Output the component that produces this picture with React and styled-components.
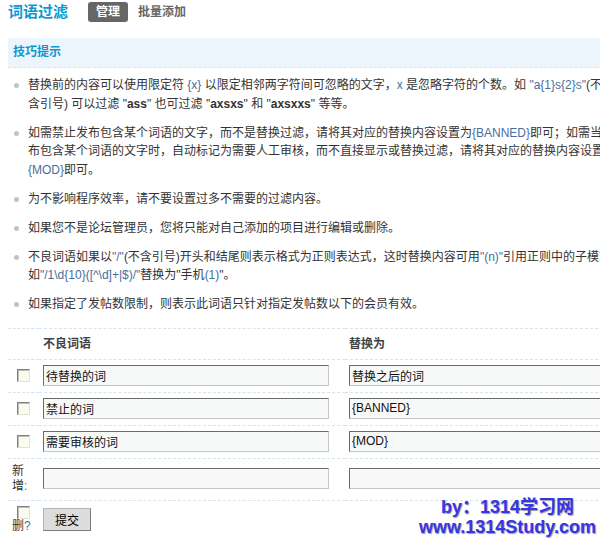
import React from 'react'
import styled, { createGlobalStyle, css } from 'styled-components'

const GlobalStyle = createGlobalStyle`
  html, body {
    margin: 0;
    padding: 0;
    background: #fff;
    overflow: hidden;
  }
  body {
    font-family: "Liberation Sans", "Noto Sans CJK SC", sans-serif;
    font-size: 12px;
    color: #333;
  }
`

const Frame = styled.div`
  position: relative;
  width: 600px;
  height: 538px;
  overflow: hidden;
`

const Page = styled.div`
  width: 820px;
  padding: 0 8px;
`

const Header = styled.div`
  display: flex;
  align-items: center;
  height: 24px;
`

const Title = styled.h1`
  margin: 0 20px 0 0;
  font-size: 15px;
  line-height: 20px;
  font-weight: bold;
  color: #0c98d0;
`

const Tab = styled.span`
  display: inline-block;
  height: 20px;
  line-height: 20px;
  padding: 0 8px;
  border-radius: 3px;
  font-weight: bold;
  color: #666;
  ${p => p.active && css`
    background: #666;
    color: #fff;
  `}
`

const Tips = styled.div`
  margin-top: 14px;
  height: 29px;
  line-height: 29px;
  padding-left: 5px;
  background: #edf5fc;
  border-bottom: 1px dashed #d6e5f3;
  font-weight: bold;
  color: #0c98d0;
`

const TipList = styled.ul`
  margin: 0;
  padding: 8px 0 3.5px;
  list-style: none;
`

const Tip = styled.li`
  position: relative;
  padding-left: 20px;
  margin-bottom: 10.5px;
  line-height: 18.5px;
  white-space: nowrap;

  &::before {
    content: "";
    position: absolute;
    left: 6px;
    top: 7px;
    width: 5px;
    height: 5px;
    border-radius: 50%;
    background: #c2c2c2;
  }
`

const Code = styled.span`
  color: #466f9e;
`

const Strong = styled.b`
  color: #333;
`

const Table = styled.table`
  width: 820px;
  border-collapse: collapse;
  table-layout: fixed;
`

const Th = styled.th`
  padding: 6px 4px;
  line-height: 18px;
  text-align: left;
  font-weight: bold;
  color: #444;
  border-top: 1px dashed #d6e5f3;
`

const Td = styled.td`
  padding: 5px 4px 6px;
  vertical-align: middle;
  border-top: 1px dashed #d6e5f3;
  line-height: 15px;
`

const Check = styled.input.attrs({ type: 'checkbox' })`
  appearance: none;
  display: block;
  width: 13px;
  height: 13px;
  margin: 0 0 0 5px;
  box-sizing: border-box;
  border: 1px solid;
  border-color: #808080 #e2e2d6 #e2e2d6 #808080;
  background: #fbfbf2;
  box-shadow: inset 1px 1px 0 #bdbdb4;
`

const Field = styled.input`
  box-sizing: border-box;
  width: 286px;
  height: 21px;
  padding: 0 2px;
  border: 1px solid;
  border-color: #6b6b6b #c6c6c6 #c6c6c6 #6b6b6b;
  background: #f7f9f9;
  font-family: "Liberation Sans", "Noto Sans CJK SC", sans-serif;
  font-size: 12px;
  color: #111;
  outline: none;
`

const Button = styled.button`
  width: 48px;
  height: 23px;
  padding: 0;
  border: 1px solid;
  border-color: #b4b4b4 #7c7c7c #7c7c7c #b4b4b4;
  background: #dcdcdc;
  font-family: "Liberation Sans", "Noto Sans CJK SC", sans-serif;
  font-size: 12px;
  color: #000;
`

const Watermark = styled.div`
  position: absolute;
  right: 4px;
  top: 497px;
  text-align: center;
  font-family: "Liberation Sans", "Noto Sans CJK SC", sans-serif;
  font-size: 18px;
  line-height: 20px;
  font-weight: bold;
  color: #3535ea;
  text-shadow: 1px 1px 1px #9a9a9a;
`

const rows = [
  ['待替换的词', '替换之后的词'],
  ['禁止的词', '{BANNED}'],
  ['需要审核的词', '{MOD}'],
]

export default function App() {
  return (
    <Frame>
      <GlobalStyle />
      <Page>
        <Header>
          <Title>词语过滤</Title>
          <Tab active>管理</Tab>
          <Tab style={{ marginLeft: 2 }}>批量添加</Tab>
        </Header>

        <Tips>技巧提示</Tips>

        <TipList>
          <Tip>
            替换前的内容可以使用限定符 <Code>{'{x}'}</Code> 以限定相邻两字符间可忽略的文字，<Code>x</Code> 是忽略字符的个数。如 <Code>"a{'{1}'}s{'{2}'}s"</Code>(不<br />
            含引号) 可以过滤 "<Strong>ass</Strong>" 也可过滤 "<Strong>axsxs</Strong>" 和 "<Strong>axsxxs</Strong>" 等等。
          </Tip>
          <Tip>
            如需禁止发布包含某个词语的文字，而不是替换过滤，请将其对应的替换内容设置为<Code>{'{BANNED}'}</Code>即可；如需当用户发<br />
            布包含某个词语的文字时，自动标记为需要人工审核，而不直接显示或替换过滤，请将其对应的替换内容设置为<br />
            <Code>{'{MOD}'}</Code>即可。
          </Tip>
          <Tip>为不影响程序效率，请不要设置过多不需要的过滤内容。</Tip>
          <Tip>如果您不是论坛管理员，您将只能对自己添加的项目进行编辑或删除。</Tip>
          <Tip>
            不良词语如果以<Code>"/"</Code>(不含引号)开头和结尾则表示格式为正则表达式，这时替换内容可用<Code>"(n)"</Code>引用正则中的子模式，<br />
            如<Code>{'"/1\\d{10}([^\\d]+|$)/"'}</Code>替换为"手机<Code>(1)</Code>"。
          </Tip>
          <Tip>如果指定了发帖数限制，则表示此词语只针对指定发帖数以下的会员有效。</Tip>
        </TipList>

        <Table>
          <colgroup>
            <col style={{ width: 31 }} />
            <col style={{ width: 306 }} />
            <col />
          </colgroup>
          <thead>
            <tr>
              <Th></Th>
              <Th>不良词语</Th>
              <Th>替换为</Th>
            </tr>
          </thead>
          <tbody>
            {rows.map(([find, replace]) => (
              <tr key={find}>
                <Td><Check /></Td>
                <Td><Field defaultValue={find} /></Td>
                <Td><Field defaultValue={replace} /></Td>
              </tr>
            ))}
            <tr>
              <Td>新<br />增<Code>:</Code></Td>
              <Td><Field /></Td>
              <Td><Field /></Td>
            </tr>
            <tr>
              <Td>
                <Check />
                删<Code>?</Code>
              </Td>
              <Td colSpan={2}><Button>提交</Button></Td>
            </tr>
          </tbody>
        </Table>
      </Page>

      <Watermark>
        by：1314学习网<br />
        www.1314Study.com
      </Watermark>
    </Frame>
  )
}
